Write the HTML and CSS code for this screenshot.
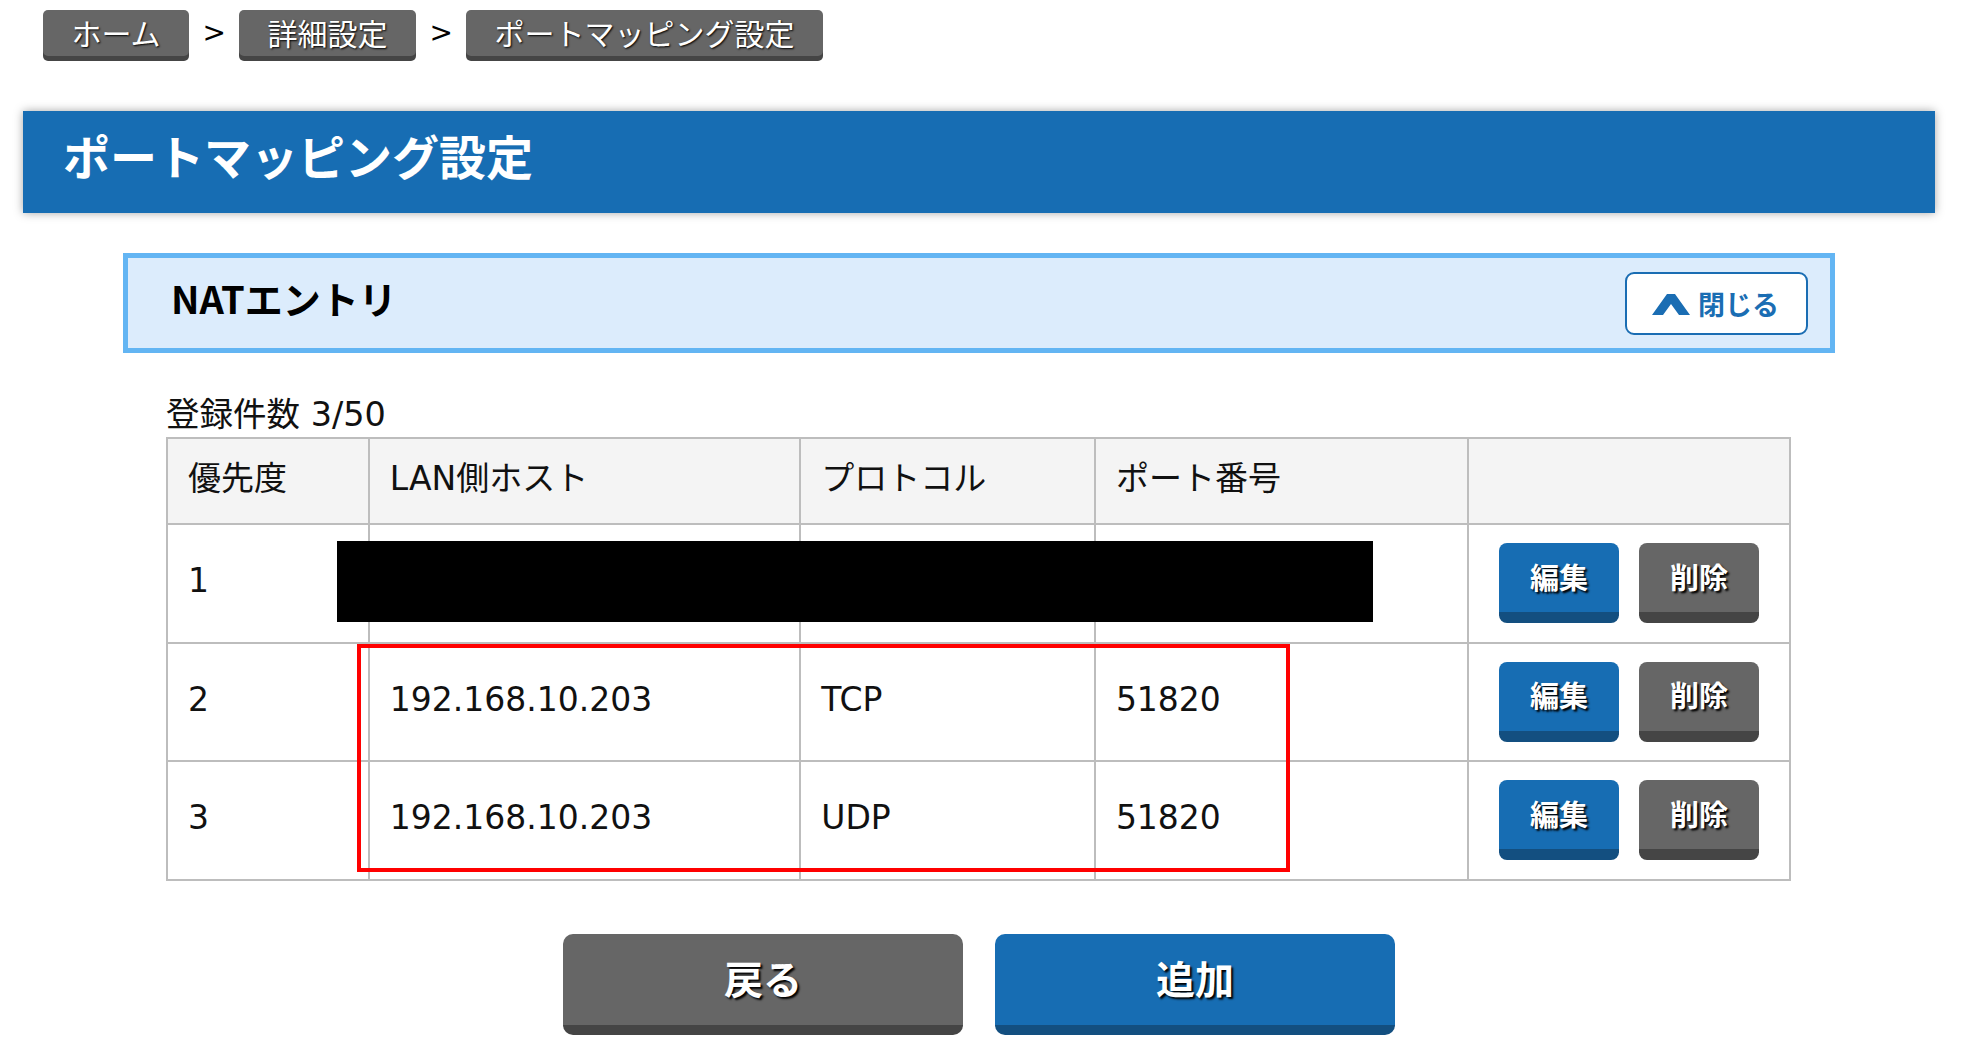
FILE: index.html
```html
<!DOCTYPE html>
<html lang="ja">
<head>
<meta charset="utf-8">
<title>ポートマッピング設定</title>
<link rel="stylesheet" href="styles.css">
</head>
<body>
<div class="page">
  <nav class="crumbs">
    <a class="crumb">ホーム</a>
    <span class="sep">&gt;</span>
    <a class="crumb">詳細設定</a>
    <span class="sep">&gt;</span>
    <a class="crumb">ポートマッピング設定</a>
  </nav>

  <h1 class="title-bar">ポートマッピング設定</h1>

  <section class="nat-box">
    <h2 class="nat-title">NATエントリ</h2>
    <button class="close-btn">
      <svg class="chev" width="38" height="21" viewBox="0 0 38 21"><path d="M0 21 L15 0 L23 0 L38 21 L27 21 L19 10 L11 21 Z" fill="#1a6db3"/></svg>
      <span>閉じる</span>
    </button>
  </section>

  <div class="list">
    <div class="count">登録件数 3/50</div>
    <table class="entries">
      <colgroup>
        <col class="c-pri"><col class="c-host"><col class="c-proto"><col class="c-port"><col class="c-act">
      </colgroup>
      <thead>
        <tr><th>優先度</th><th>LAN側ホスト</th><th>プロトコル</th><th>ポート番号</th><th></th></tr>
      </thead>
      <tbody>
        <tr><td>1</td><td></td><td></td><td></td><td class="act"><button class="btn blue">編集</button><button class="btn gray">削除</button></td></tr>
        <tr><td>2</td><td>192.168.10.203</td><td>TCP</td><td>51820</td><td class="act"><button class="btn blue">編集</button><button class="btn gray">削除</button></td></tr>
        <tr><td>3</td><td>192.168.10.203</td><td>UDP</td><td>51820</td><td class="act"><button class="btn blue">編集</button><button class="btn gray">削除</button></td></tr>
      </tbody>
    </table>
    <div class="redact"></div>
    <div class="highlight"></div>
  </div>

  <div class="actions">
    <button class="big gray">戻る</button>
    <button class="big blue">追加</button>
  </div>
</div>
</body>
</html>
```
FILE: styles.css
```css
html, body {
  margin: 0;
  padding: 0;
  background: #ffffff;
}
body {
  font-family: "DejaVu Sans", "Noto Sans CJK JP", sans-serif;
  color: #111;
}
.page {
  margin: 0 27px 0 23px;
  padding-top: 10px;
}

/* breadcrumb */
.crumbs {
  display: flex;
  align-items: flex-start;
  padding-left: 20px;
}
.crumb {
  display: block;
  background: #666666;
  color: #fff;
  font-family: "Noto Sans CJK JP", sans-serif;
  font-size: 30px;
  height: 46px;
  line-height: 44px;
  padding: 0 28.5px;
  border-radius: 5px;
  box-shadow: 0 5px 0 #454545;
  text-shadow: 1px 1px 2px #000;
  white-space: nowrap;
}
.sep {
  width: 50px;
  text-align: center;
  font-size: 28px;
  line-height: 46px;
  color: #000;
}

/* title */
.title-bar {
  margin: 55px 0 0 0;
  height: 102px;
  box-sizing: border-box;
  background: #176db3;
  color: #fff;
  font-family: "Noto Sans CJK JP", sans-serif;
  font-weight: 700;
  font-size: 47px;
  line-height: 88px;
  padding: 0 0 0 40px;
  box-shadow: 0 0 9px rgba(0, 0, 0, 0.35);
}

/* NAT section */
.nat-box {
  margin: 40px 100px 0 100px;
  height: 100px;
  box-sizing: border-box;
  border: 5px solid #63b5f3;
  background: #dcecfc;
  display: flex;
  align-items: center;
  justify-content: space-between;
  padding: 0 22px 0 43px;
}
.nat-title {
  margin: 0;
  font-family: "Noto Sans CJK JP", sans-serif;
  font-weight: 700;
  font-size: 38px;
  color: #000;
  line-height: 1;
  padding-bottom: 10px;
}
.close-btn {
  width: 183px;
  height: 63px;
  box-sizing: border-box;
  border: 2px solid #1a6db3;
  border-radius: 9px;
  background: #fff;
  display: flex;
  align-items: center;
  justify-content: center;
  gap: 8px;
  padding: 0 2px 0 0;
  color: #1a6db3;
  font-family: "Noto Sans CJK JP", sans-serif;
  font-weight: 700;
  font-size: 27px;
}
.chev { display: block; margin-top: 2px; }

/* list */
.list {
  position: relative;
  margin: 40px 144px 0 143px;
}
.count {
  font-size: 33.5px;
  line-height: 44px;
  color: #111;
}
.entries {
  width: 100%;
  border-collapse: collapse;
  border: 2px solid #bdbdbd;
  font-size: 33px;
  color: #111;
}
.c-pri { width: 202px; }
.c-host { width: 432px; }
.c-proto { width: 295px; }
.c-port { width: 374px; }
.c-act { width: 322px; }
.entries th, .entries td {
  border: 2px solid #bdbdbd;
  text-align: left;
  padding: 16px 20px 20.5px;
  font-weight: 400;
  vertical-align: middle;
  white-space: nowrap;
}
.entries th {
  background: #f4f4f4;
  line-height: 46px;
  padding: 17px 20px 21px;
}
.entries td {
  line-height: 46px;
}
.entries td.act {
  text-align: center;
  padding: 18px 0 18.5px;
  font-size: 0;
}
.btn {
  display: inline-block;
  vertical-align: top;
  width: 120px;
  height: 80px;
  box-sizing: border-box;
  border: none;
  border-radius: 8px;
  color: #fff;
  font-family: "Noto Sans CJK JP", sans-serif;
  font-weight: 700;
  font-size: 29px;
  line-height: 62px;
  padding: 0 0 4px;
  text-shadow: 2px 2px 2px #000;
}
.btn + .btn { margin-left: 20px; }
.blue {
  background: #176db3;
  border-bottom: 11px solid #134f80;
}
.gray {
  background: #666666;
  border-bottom: 11px solid #454545;
}
.redact {
  position: absolute;
  left: 171px;
  top: 148px;
  width: 1036px;
  height: 81px;
  background: #000;
}
.highlight {
  position: absolute;
  left: 191px;
  top: 251px;
  width: 933px;
  height: 228px;
  box-sizing: border-box;
  border: 4px solid #ff0000;
}

/* bottom actions */
.actions {
  display: flex;
  justify-content: center;
  gap: 32px;
  margin-top: 53px;
}
.big {
  width: 400px;
  height: 101px;
  box-sizing: border-box;
  border: none;
  border-radius: 10px;
  color: #fff;
  font-family: "Noto Sans CJK JP", sans-serif;
  font-weight: 700;
  font-size: 39px;
  line-height: 84px;
  padding: 0 0 4px;
  text-shadow: 2px 2px 2px #000;
}
.big.gray { border-bottom: 10px solid #454545; }
.big.blue { border-bottom: 10px solid #134f80; }
```
